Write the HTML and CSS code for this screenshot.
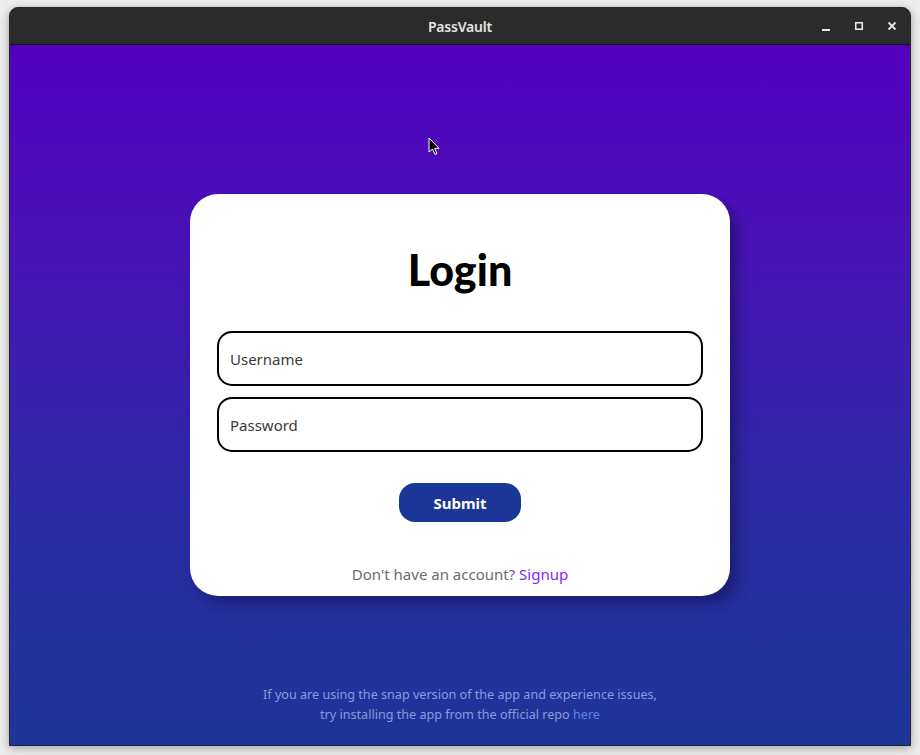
FILE: index.html
```html
<!DOCTYPE html>
<html>
<head>
<meta charset="utf-8">
<title>PassVault</title>
<link rel="stylesheet" href="styles.css">
</head>
<body>
<div class="window">
  <div class="titlebar">
    <div class="title">PassVault</div>
    <div class="controls">
      <svg class="ctl" width="12" height="12" viewBox="0 0 12 12"><rect x="2" y="9" width="8" height="2" fill="#e6e6e6"/></svg>
      <svg class="ctl" width="12" height="12" viewBox="0 0 12 12"><rect x="2.75" y="2.75" width="6.5" height="6.5" fill="none" stroke="#e6e6e6" stroke-width="1.6"/></svg>
      <svg class="ctl" width="12" height="12" viewBox="0 0 12 12"><path d="M2.5 2.5 L9.5 9.5 M9.5 2.5 L2.5 9.5" stroke="#e6e6e6" stroke-width="1.8"/></svg>
    </div>
  </div>
  <div class="content">
    <div class="spacer"></div>
    <form class="card">
      <h1 class="heading">Login</h1>
      <input class="field" type="text" placeholder="Username">
      <input class="field" type="password" placeholder="Password">
      <button class="submit" type="button">Submit</button>
      <p class="alt">Don't have an account? <a class="signup" href="#">Signup</a></p>
    </form>
    <div class="note">
      <p>If you are using the snap version of the app and experience issues,<br>try installing the app from the official repo <a class="here" href="#">here</a></p>
    </div>
    <svg class="cursor" width="14" height="20" viewBox="0 0 14 20"><path d="M1 1 L1 15 L4.5 12 L7 17.5 L9 16.6 L6.6 11.3 L11 11.3 Z" fill="#000" stroke="#fff" stroke-width="1"/></svg>
  </div>
</div>
</body>
</html>
```
FILE: styles.css
```css
* { box-sizing: border-box; }
html, body { margin: 0; padding: 0; }
body {
  background: #ededed;
  width: 920px;
  height: 755px;
  overflow: hidden;
  font-family: "Noto Sans", "Open Sans", sans-serif;
  padding: 7px 9px 0 9px;
}
.window {
  width: 902px;
  height: 739px;
  border-radius: 9px 9px 0 0;
  overflow: hidden;
  background: #2a2a2a;
  display: flex;
  flex-direction: column;
  box-shadow: 0 2px 10px rgba(0,0,0,0.35);
  border: 1px solid #262626;
}
.titlebar {
  height: 37px;
  flex: none;
  display: flex;
  align-items: center;
  justify-content: center;
  position: relative;
  background: #2b2b2b;
  border-bottom: 1px solid #111;
}
.title {
  color: #e4e4e4;
  font-size: 14px;
  font-weight: 600;
  letter-spacing: -0.2px;
}
.controls {
  position: absolute;
  right: 12px;
  top: 12px;
  display: flex;
  gap: 21px;
}
.ctl { display: block; }
.content {
  flex: 1;
  position: relative;
  background: linear-gradient(180deg, #5400bf 0%, #4714b6 30%, #2d2aa6 65%, #1d3598 100%);
  display: grid;
  grid-template-rows: 1fr auto 1fr;
  justify-items: center;
}
.card {
  width: 540px;
  background: #fff;
  border-radius: 28px;
  padding: 50px 27px 10px;
  display: flex;
  flex-direction: column;
  align-items: center;
  box-shadow: 8px 8px 14px rgba(10, 10, 60, 0.45);
  margin: 0;
}
.heading {
  margin: 0 0 35px;
  height: 52px;
  line-height: 52px;
  font-family: "Lato", sans-serif;
  font-weight: 900;
  font-size: 43px;
  color: #000;
}
.field {
  width: 486px;
  height: 55px;
  border: 2px solid #000;
  border-radius: 15px;
  padding: 0 11px;
  font-family: "Noto Sans", sans-serif;
  font-size: 15px;
  color: #222;
  outline: none;
  background: #fff;
}
.field + .field { margin-top: 11px; }
.field::placeholder { color: #3a3a3a; }
.submit {
  margin-top: 31px;
  width: 122px;
  height: 39px;
  border: none;
  border-radius: 16px;
  background: #1b3697;
  color: #fff;
  font-family: "Noto Sans", sans-serif;
  font-weight: 700;
  font-size: 15px;
}
.alt {
  margin: 40px 0 0;
  height: 24px;
  line-height: 24px;
  font-size: 15px;
  color: #6b6b72;
}
.signup { color: #7a2cf2; text-decoration: none; }
.note {
  align-self: end;
  padding-bottom: 20px;
  text-align: center;
}
.note p {
  margin: 0;
  font-size: 12.6px;
  line-height: 20px;
  color: #8d9ad6;
}
.here { color: #5d82e6; text-decoration: none; }
.cursor {
  position: absolute;
  left: 418px;
  top: 92px;
}
```
